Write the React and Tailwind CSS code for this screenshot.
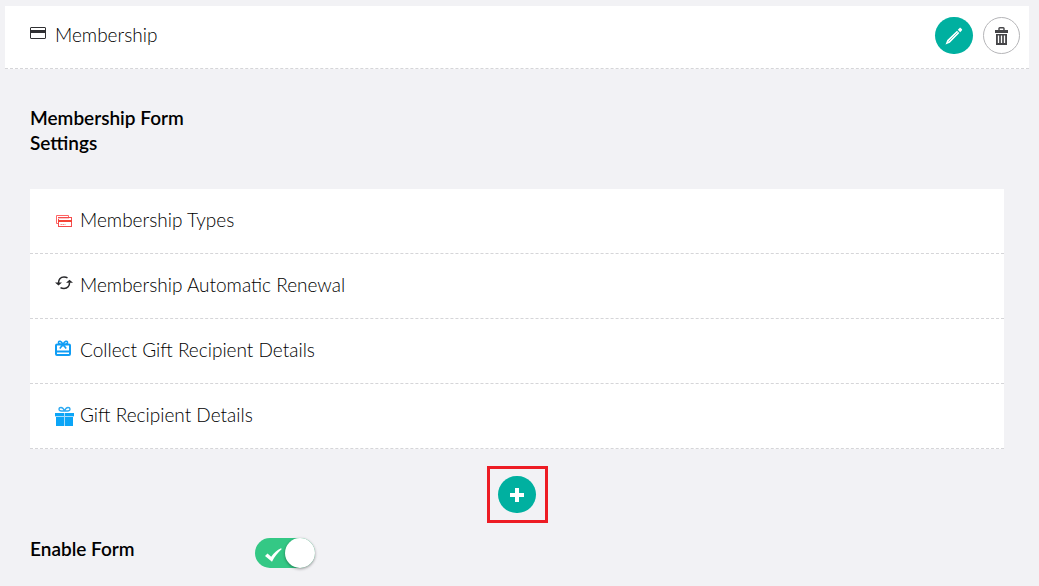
import React, { useState } from "react";

const CardIcon = () => (
  <svg viewBox="0 0 16 12" className="w-4 h-3" aria-hidden="true">
    <rect x="0.5" y="0.5" width="15" height="11" rx="0.5" fill="none" stroke="#303033" />
    <rect x="0" y="3" width="16" height="3" fill="#303033" />
  </svg>
);

const CardsIcon = () => (
  <svg viewBox="0 0 16 12" className="w-4 h-3" fill="none" aria-hidden="true">
    <path d="M2 8.5H.5V.5h12V3" stroke="#ff6464" />
    <rect x="2.5" y="2.5" width="13" height="9" fill="#fff" stroke="#f44c4c" />
    <path d="M2 3.5h11" stroke="#ffc4c8" />
    <path d="M2 6h14" stroke="#f44336" strokeWidth="2" />
    <path d="M4.5 9.500h5" stroke="#f88" strokeDasharray="1.5 0.5" />
  </svg>
);

const RenewIcon = () => (
  <svg viewBox="0 0 18 14" className="w-[18px] h-[14px]" fill="none" aria-hidden="true">
    <path d="M3.500 7C3.300 3.500 5.500 1 9 1c1.300 0 2.500.2 3.500.8" stroke="#28282b" strokeWidth="1.500" />
    <path d="M14.500 6.500c.2 3.500-2 6-5.500 6-1.300 0-2.500-.2-3.500-.8" stroke="#28282b" strokeWidth="1.500" />
    <path d="M0 6.600h7L3.500 9.600zM18 6.800h-7L14.500 3.800z" fill="#28282b" />
  </svg>
);

const GiftCardIcon = () => (
  <svg viewBox="0 0 16 16" className="w-4 h-4" fill="none" stroke="#0f9df5" aria-hidden="true">
    <rect x="1" y="4.500" width="14" height="10.500" rx="1" strokeWidth="2" />
    <path d="M1 11.500h14" strokeWidth="2" />
    <path d="M8 4.500C6.500 1 3.500.2 3.500 2.500c0 1.500 2 2.200 4.500 2.200s4.500-.7 4.500-2.200C12.500.2 9.500 1 8 4.500zM8 4.500L4.800 8.500M8 4.500l3.200 4" strokeWidth="1.600" />
  </svg>
);

const GiftIcon = () => (
  <svg viewBox="0 0 19 20" className="w-[19px] h-5" aria-hidden="true">
    <path d="M0 7h9v3H0zM10 7h9v3h-9zM1 11h8v9H1zM10 11h8v9h-8z" fill="#0ba5f7" />
    <path d="M9 7h1v13H9zM0 10h19v1H0z" fill="#a5dcfb" />
    <path d="M9.500 5C8.500 2.300 7.500 1.500 6 1.500s-2 .8-2 1.800S5 5 6.500 5zM9.500 5c1-2.700 2-3.500 3.500-3.500s2 .8 2 1.800S14 5 12.500 5z" fill="none" stroke="#2ba9f2" strokeWidth="1.300" />
  </svg>
);

const PencilIcon = () => (
  <svg viewBox="0 0 18 18" className="w-[18px] h-[18px]" fill="#fff" aria-hidden="true">
    <path d="M.5 17.500L2.300 13 12 3.700 14.300 6 4.800 15.800zM12.800 2.800L14.400 1.200c.5-.5 1-.5 1.500 0l.9.9c.5.5.5 1 0 1.500l-1.600 1.600z" />
    <path d="M3.500 14.500l9-9" stroke="#00b0a0" strokeWidth="0.600" />
  </svg>
);

const TrashIcon = () => (
  <svg viewBox="0 0 13 18" className="w-[13px] h-[18px]" aria-hidden="true">
    <path d="M4 3V1.500C4 1 4.300.7 4.800.7h3.400c.5 0 .8.3.8.8V3" fill="none" stroke="#464649" strokeWidth="1.400" />
    <path d="M0 3h13v3H0zM1 7h11v11H1z" fill="#464649" />
    <path d="M3.500 8.500v7.500M6.500 8.500v7.500M9.500 8.500v7.500" stroke="#fff" strokeWidth="1.300" />
  </svg>
);

const items = [
  { name: "Membership Types", icon: <CardsIcon />, iconClass: "pt-[3px] pl-px" },
  { name: "Membership Automatic Renewal", icon: <RenewIcon />, iconClass: "pb-[3px]" },
  { name: "Collect Gift Recipient Details", icon: <GiftCardIcon />, iconClass: "pb-[3px]" },
  { name: "Gift Recipient Details", icon: <GiftIcon />, iconClass: "pt-[3px]" },
];

const Toggle = ({ id, checked, onChange }) => (
  <label htmlFor={id} className="relative block w-[60px] h-[30px] cursor-pointer">
    <input
      id={id}
      type="checkbox"
      checked={checked}
      onChange={onChange}
      className="peer appearance-none block w-full h-full rounded-full bg-gray-300 checked:bg-[#34c885] cursor-pointer"
    />
    <svg viewBox="0 0 17 14" className="absolute left-[10px] top-[10px] w-[17px] h-[14px]" aria-hidden="true">
      <path d="M0 8l2.500-2.500 3.700 3.200C9 5 12 2 16 .2l.8.800C13 4.500 9.500 8.500 7 13.800z" fill="#fff" />
    </svg>
    <span className="absolute top-0 left-0 peer-checked:left-[30px] w-[30px] h-[30px] rounded-full bg-white shadow-[0_1px_3px_rgba(0,0,0,0.4)]" />
  </label>
);

const App = () => {
  const [enabled, setEnabled] = useState(true);

  return (
    <div className="min-h-screen bg-[#f2f2f5] pt-[6px] pl-[5px] pr-[10px] font-[Lato,sans-serif] font-light text-[19px] leading-[25px] text-black">
      {/* Section header */}
      <header className="flex items-center justify-between bg-white pl-[25px] pr-[9px] pt-[11px] pb-[14px] border-b border-dashed border-[#d5d5d8]">
        <div className="flex items-center pb-[2px]">
          <span className="w-[25px] pb-1">
            <CardIcon />
          </span>
          <h1>Membership</h1>
        </div>
        <div className="flex items-center gap-[10px]">
          <button type="button" aria-label="Edit" className="flex items-center justify-center w-[38px] h-[37px] rounded-full bg-[#00b0a0]">
            <PencilIcon />
          </button>
          <button type="button" aria-label="Delete" className="flex items-center justify-center w-[37px] h-[37px] rounded-full bg-white border border-[#b5b5b8]">
            <TrashIcon />
          </button>
        </div>
      </header>

      <main className="px-[25px] pt-[36px]">
        <h2 className="w-[200px] font-semibold">Membership Form Settings</h2>

        {/* Form sections */}
        <ul className="mt-[34px]">
          {items.map((item) => (
            <li key={item.name} className="flex items-center h-[65px] pl-[25px] pb-[3px] bg-white border-b border-dashed border-[#d5d5d8]">
              <span className={`w-[25px] shrink-0 ${item.iconClass}`}>{item.icon}</span>
              {item.name}
            </li>
          ))}
        </ul>

        <div className="flex justify-center mt-[17px]">
          <div className="flex items-center justify-center w-[61px] h-[57px] border-3 border-[#ed1c24]">
            <button type="button" aria-label="Add section" className="flex items-center justify-center w-[38px] h-[37px] rounded-full bg-[#00b0a0]">
              <svg viewBox="0 0 14 14" className="w-[14px] h-[14px]" aria-hidden="true">
                <path d="M5 0h4v5h5v4H9v5H5V9H0V5h5z" fill="#fff" />
              </svg>
            </button>
          </div>
        </div>

        <div className="flex items-end mt-[13px] pb-4">
          <label htmlFor="enable-form" className="w-[225px] pb-[7px] font-semibold">
            Enable Form
          </label>
          <Toggle id="enable-form" checked={enabled} onChange={() => setEnabled(!enabled)} />
        </div>
      </main>
    </div>
  );
};

export default App;
